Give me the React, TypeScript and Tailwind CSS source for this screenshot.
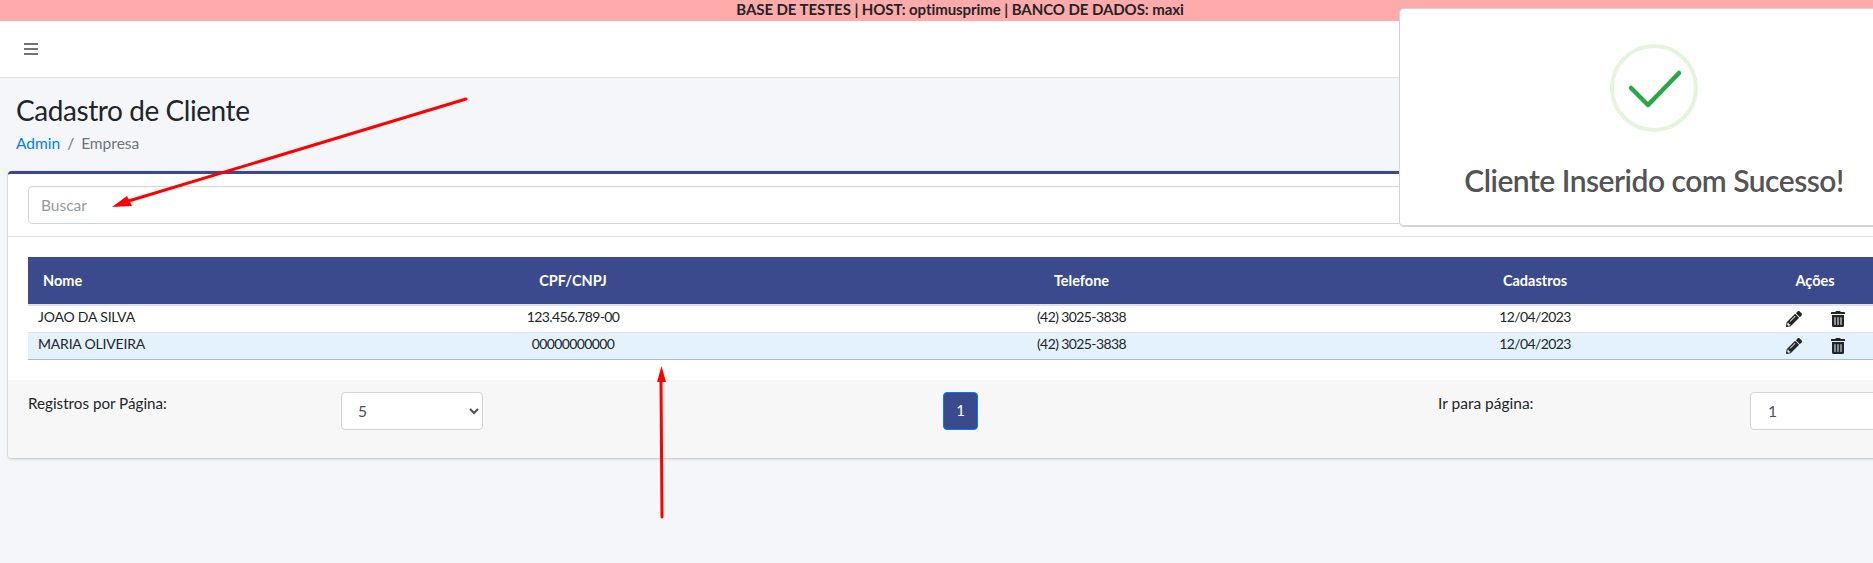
import { FaPencilAlt, FaTrashAlt } from "react-icons/fa"

const clientes = [
	{ nome: "JOAO DA SILVA", doc: "123.456.789-00", fone: "(42) 3025-3838", data: "12/04/2023" },
	{ nome: "MARIA OLIVEIRA", doc: "00000000000", fone: "(42) 3025-3838", data: "12/04/2023" },
]

function SuccessToast() {
	return (
		<div className="absolute left-[1399px] top-[8px] flex h-[219px] w-[510px] flex-col items-center rounded-[5px] border border-[#d0d3da] border-b-2 bg-white">
			<svg className="mt-[35px] h-[88px] w-[88px]" viewBox="0 0 88 88" fill="none">
				<circle cx="44" cy="44" r="42" stroke="#e5f4dc" strokeWidth="4" />
				<path d="M21 44 L38 61 L69 29" stroke="#28a745" strokeWidth="4.5" strokeLinecap="round" strokeLinejoin="round" />
			</svg>
			<h2 className="mt-[26px] text-[30px] leading-[44px] font-semibold tracking-[-0.5px] text-[#545454]">
				Cliente Inserido com Sucesso!
			</h2>
		</div>
	)
}

function Annotations() {
	return (
		<svg className="pointer-events-none absolute inset-0 h-[563px] w-[1873px]" viewBox="0 0 1873 563" fill="none">
			<path d="M466 99 L122 203" stroke="#ff0000" strokeWidth="3" strokeLinecap="round" />
			<path d="M112 207 L127 196 L132 206 Z" fill="#ff0000" />
			<path d="M662 517 L661 380" stroke="#ff0000" strokeWidth="3" strokeLinecap="round" />
			<path d="M661.5 366 L657 382 L666 382 Z" fill="#ff0000" />
		</svg>
	)
}

export default function App() {
	return (
		<div className="relative h-[563px] w-[1873px] overflow-hidden bg-[#f4f6f9] font-['Lato',sans-serif] text-[14px] text-[#212529]">
			<div className="h-[21px] w-[1920px] bg-[#ffabab] text-center text-[15px] leading-[19px] font-bold tracking-[-0.07px]">
				BASE DE TESTES | HOST: optimusprime | BANCO DE DADOS: maxi
			</div>

			<nav className="flex h-[57px] items-center border-b border-[#dee2e6] bg-white pl-[24px]">
				<svg className="h-[12px] w-[14px] text-[#6f7377]" viewBox="0 0 14 12" fill="currentColor">
					<rect y="0" width="14" height="2" />
					<rect y="5" width="14" height="2" />
					<rect y="10" width="14" height="2" />
				</svg>
			</nav>

			<div className="pl-[16px] pt-[14px]">
				<h1 className="text-[28px] leading-[36px] font-normal tracking-[-0.43px]">Cadastro de Cliente</h1>
				<div className="mt-[5px] flex items-center text-[15.5px] leading-[21px]">
					<a className="text-[#007bff]">Admin</a>
					<span className="px-[7px] text-[#6c757d]">/</span>
					<span className="text-[#6c757d]">Empresa</span>
				</div>
			</div>

			<section className="mt-[17px] ml-[8px] w-[1900px] rounded-[4px] border-t-[3px] border-[#3b4a8c] bg-white shadow-[0_0_1px_rgba(0,0,0,0.2),0_1px_3px_rgba(0,0,0,0.2)]">
				<div className="h-[63px] border-b border-[#dfe1e4] pl-[20px] pt-[12px]">
					<input
						placeholder="Buscar"
						readOnly
						className="h-[38px] w-[1860px] rounded-[4px] border border-[#ced4da] bg-white px-[12px] text-[15.5px] outline-none placeholder:text-[#939ba2]"
					/>
				</div>

				<div className="px-[20px] pt-[20px] pb-[20px]">
					<table className="w-[1873px] table-fixed border-collapse">
						<colgroup>
							<col className="w-[296px]" />
							<col className="w-[498px]" />
							<col className="w-[519px]" />
							<col className="w-[388px]" />
							<col className="w-[172px]" />
						</colgroup>
						<thead className="bg-[#3b4a8c] text-[14.5px] text-white">
							<tr className="h-[48px] border-b-2 border-[#dee2e6]">
								<th className="pl-[15px] text-left font-bold">Nome</th>
								<th className="font-bold">CPF/CNPJ</th>
								<th className="font-bold">Telefone</th>
								<th className="font-bold">Cadastros</th>
								<th className="font-bold">Ações</th>
							</tr>
						</thead>
						<tbody>
							{clientes.map((c, i) => (
								<tr
									key={c.nome}
									className={
										i === 0 ? "h-[27px] border-b border-[#dee2e6]" : "h-[27px] border-b border-[#b4b8c0] bg-[#e4f2fe]"
									}
								>
									<td className="pl-[10px] pb-[4px] tracking-[-0.2px]">{c.nome}</td>
									<td className="pb-[4px] text-center tracking-[-0.6px]">{c.doc}</td>
									<td className="pb-[4px] text-center tracking-[-0.6px]">{c.fone}</td>
									<td className="pb-[4px] text-center tracking-[-0.6px]">{c.data}</td>
									<td>
										<div className="flex items-center pl-[57px]">
											<FaPencilAlt className="h-[16px] w-[16px] text-[#212529]" />
											<FaTrashAlt className="ml-[29px] h-[16px] w-[14px] text-[#212529]" />
										</div>
									</td>
								</tr>
							))}
						</tbody>
					</table>
				</div>

				<div className="flex h-[78px] items-start rounded-b-[4px] bg-[#f7f7f7] pl-[20px] pt-[12px]">
					<span className="mt-[1px] w-[313px] text-[15.2px] leading-[21px]">Registros por Página:</span>
					<select className="h-[38px] w-[142px] rounded-[4px] border border-[#ced4da] bg-white pl-[12px] text-[15.5px] text-[#495057]">
						<option>5</option>
					</select>
					<button className="ml-[460px] h-[38px] w-[35px] rounded-[4px] border border-[#007bff] bg-[#3b4a8c] text-[15px] text-white">
						1
					</button>
					<span className="ml-[460px] mt-[1px] w-[312px] text-[15.5px] leading-[21px]">Ir para página:</span>
					<input
						value="1"
						readOnly
						className="h-[38px] w-[142px] rounded-[4px] border border-[#ced4da] bg-white px-[17px] text-[15.5px] text-[#495057] outline-none"
					/>
				</div>
			</section>

			<SuccessToast />
			<Annotations />
		</div>
	)
}
